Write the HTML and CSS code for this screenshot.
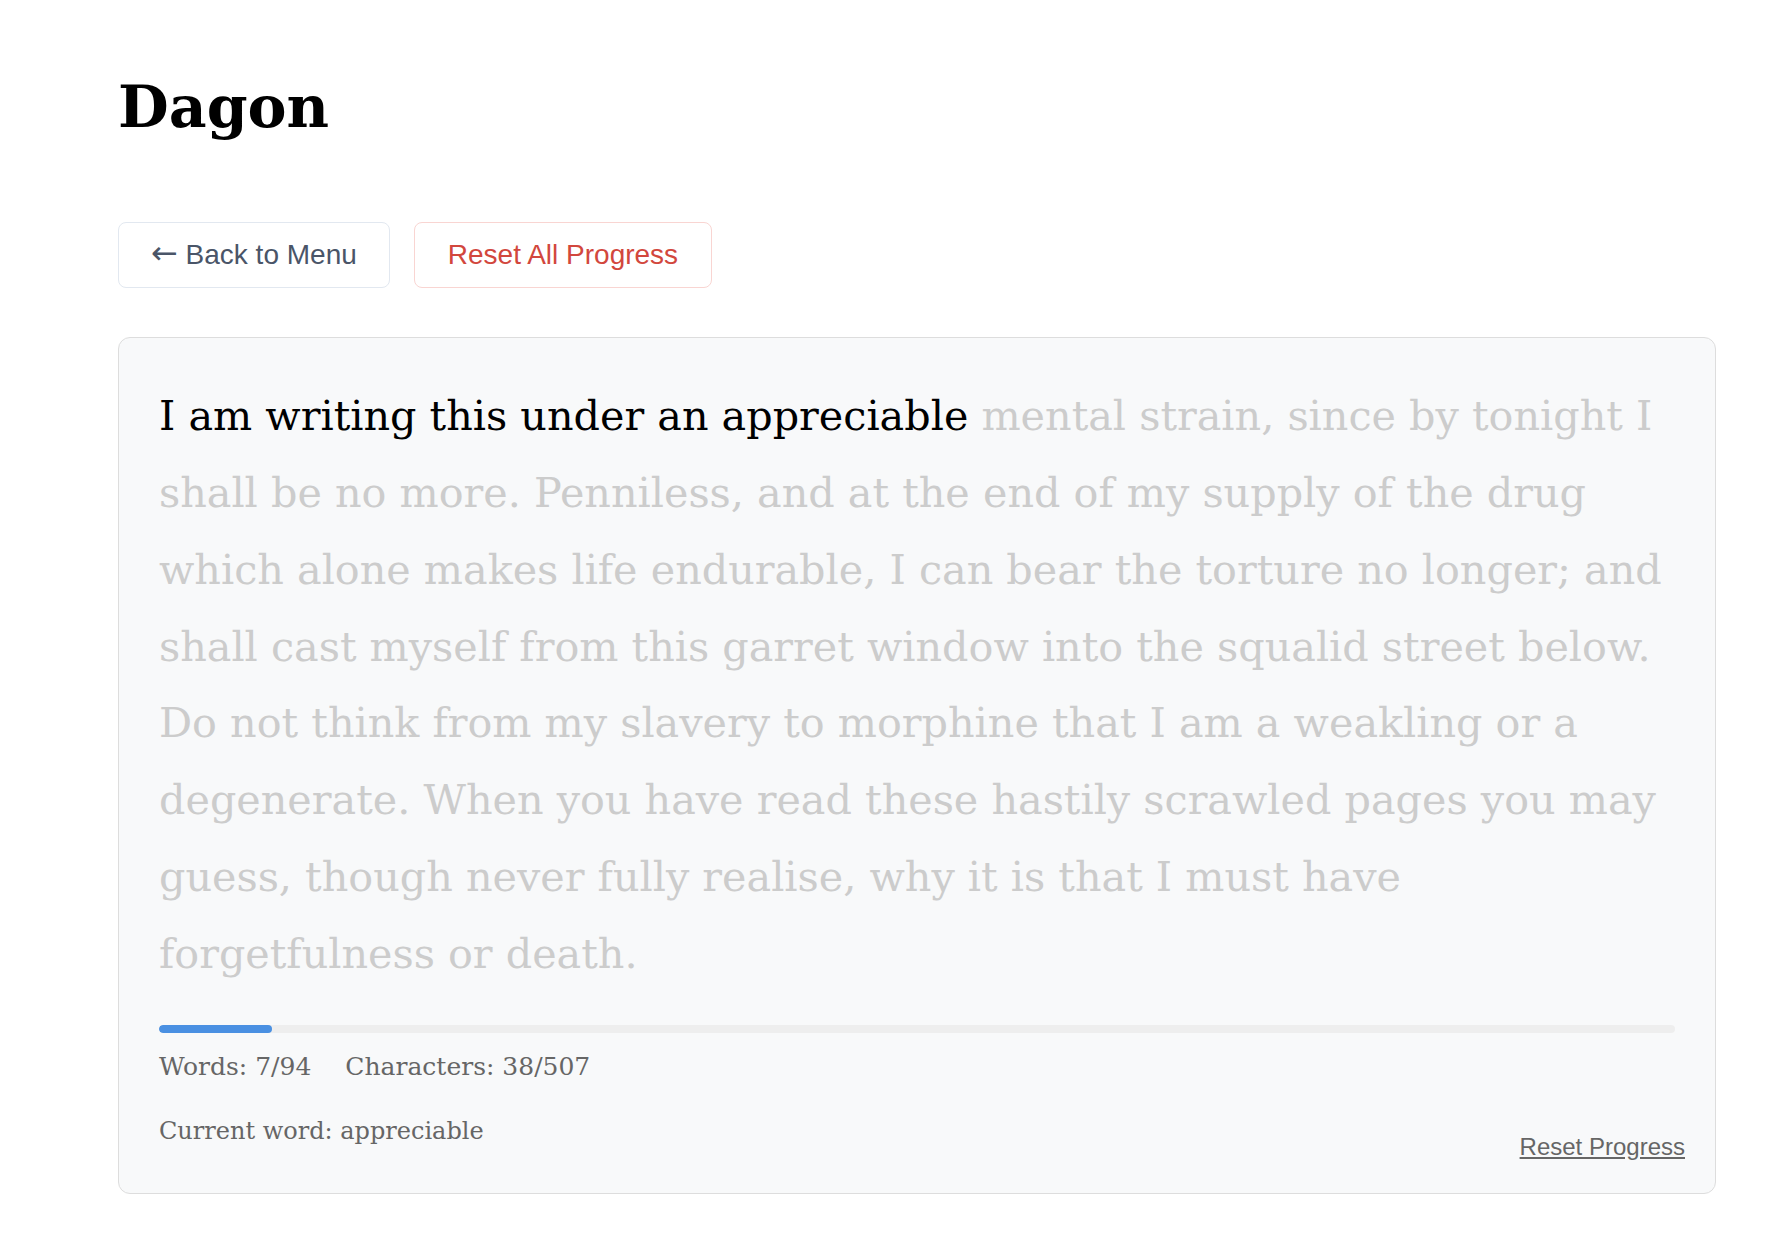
FILE: index.html
```html
<!DOCTYPE html>
<html lang="en">
<head>
<meta charset="utf-8">
<title>Dagon</title>
<link rel="stylesheet" href="styles.css">
</head>
<body>
<div class="page">
  <h1 class="title">Dagon</h1>
  <div class="actions">
    <button class="btn btn-back"><span class="arrow">←</span> Back to Menu</button>
    <button class="btn btn-reset-all">Reset All Progress</button>
  </div>
  <section class="card">
    <p class="passage"><span class="typed">I am writing this under an appreciable</span> mental strain, since by tonight I shall be no more. Penniless, and at the end of my supply of the drug which alone makes life endurable, I can bear the torture no longer; and shall cast myself from this garret window into the squalid street below. Do not think from my slavery to morphine that I am a weakling or a degenerate. When you have read these hastily scrawled pages you may guess, though never fully realise, why it is that I must have forgetfulness or death.</p>
    <div class="progress"><div class="progress-fill" style="width: 7.447%"></div></div>
    <div class="stats">
      <span class="stat">Words: 7/94</span>
      <span class="stat">Characters: 38/507</span>
    </div>
    <div class="current">Current word: appreciable</div>
    <a class="reset-link" href="#">Reset Progress</a>
  </section>
</div>
</body>
</html>
```

FILE: styles.css
```css
html, body {
  margin: 0;
  padding: 0;
  background: #ffffff;
}

body {
  font-family: Georgia, "DejaVu Serif", serif;
  color: #000;
}

.page {
  width: 1598px;
  margin-left: 118px;
  padding-top: 72px;
  padding-bottom: 40px;
}

.title {
  font-family: Georgia, "DejaVu Serif", serif;
  font-weight: bold;
  font-size: 58.5px;
  line-height: 1.2;
  margin: 0;
  color: #000;
}

.actions {
  display: flex;
  gap: 24px;
  margin-top: 80px;
}

.btn {
  font-family: "Liberation Sans", Arial, sans-serif;
  font-size: 28px;
  line-height: 32px;
  padding: 16px 32px;
  background: #ffffff;
  border-radius: 8px;
  cursor: pointer;
}

.arrow {
  font-family: "DejaVu Sans", sans-serif;
  font-size: 32px;
  line-height: 0;
}

.btn-back {
  color: #4a5568;
  border: 1px solid #e2e8f0;
}

.btn-reset-all {
  color: #d2473d;
  border: 1px solid #f9d5d2;
  padding: 16px 33px;
}

.card {
  position: relative;
  margin-top: 49px;
  background: #f8f9fa;
  border: 1px solid #dddddd;
  border-radius: 12px;
  padding: 40px 40px 44px 40px;
}

.passage {
  margin: 0;
  font-size: 41.3px;
  line-height: 76.8px;
  color: #cccccc;
}

.typed {
  color: #000000;
}

.progress {
  margin-top: 32px;
  height: 8px;
  border-radius: 4px;
  background: #eeeeee;
  overflow: hidden;
}

.progress-fill {
  height: 100%;
  background: #4a90e2;
  border-radius: 4px;
}

.stats {
  display: flex;
  gap: 34px;
  margin-top: 16px;
  font-size: 25px;
  line-height: 36px;
  color: #666666;
}

.current {
  margin-top: 28px;
  font-size: 24px;
  line-height: 36px;
  color: #666666;
}

.reset-link {
  position: absolute;
  right: 30px;
  bottom: 32px;
  font-family: "Liberation Sans", Arial, sans-serif;
  font-size: 24px;
  color: #666666;
  text-decoration: underline;
}
```
